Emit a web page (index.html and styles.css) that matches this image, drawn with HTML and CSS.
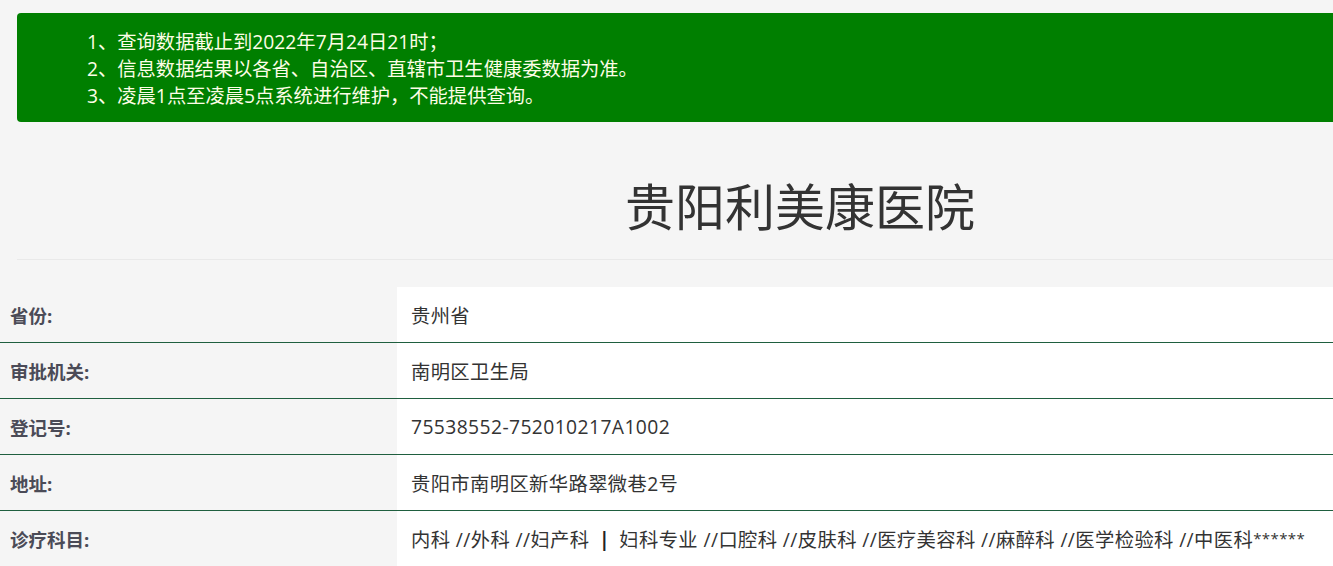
FILE: index.html
```html
<!DOCTYPE html>
<html lang="zh-CN">
<head>
<meta charset="utf-8">
<title>贵阳利美康医院</title>
<link rel="stylesheet" href="styles.css">
</head>
<body>
<div class="page">
  <div class="notice">
    <p>1、查询数据截止到2022年7月24日21时；</p>
    <p>2、信息数据结果以各省、自治区、直辖市卫生健康委数据为准。</p>
    <p>3、凌晨1点至凌晨5点系统进行维护，不能提供查询。</p>
  </div>
  <div class="title-wrap">
    <h1 class="title">贵阳利美康医院</h1>
  </div>
  <div class="info">
    <div class="row"><div class="label">省份:</div><div class="value">贵州省</div></div>
    <div class="row"><div class="label">审批机关:</div><div class="value">南明区卫生局</div></div>
    <div class="row"><div class="label">登记号:</div><div class="value">75538552-752010217A1002</div></div>
    <div class="row"><div class="label">地址:</div><div class="value">贵阳市南明区新华路翠微巷2号</div></div>
    <div class="row"><div class="label">诊疗科目:</div><div class="value">内科 //外科 //妇产科 <span class="sep">|</span> 妇科专业 //口腔科 //皮肤科 //医疗美容科 //麻醉科 //医学检验科 //中医科<span class="stars">******</span></div></div>
  </div>
</div>
</body>
</html>
```

FILE: styles.css
```css
html, body {
  margin: 0;
  padding: 0;
  background: #f5f5f5;
  overflow: hidden;
}
body {
  font-family: "Open Sans", "Noto Sans CJK SC", sans-serif;
  color: #333;
}
.page {
  width: 1600px;
  padding-top: 13px;
}
.notice {
  margin: 0 17px;
  background: #007f00;
  border-radius: 4px;
  padding: 15px 70px 13px;
  color: #fdfde6;
  font-size: 19.3px;
  line-height: 27px;
}
.notice p {
  margin: 0;
}
.title-wrap {
  margin: 0 17px;
  height: 137px;
  border-bottom: 1px solid #e9e9e9;
  display: flex;
  align-items: center;
  justify-content: center;
}
.title {
  margin: 0;
  padding-top: 33px;
  font-size: 50px;
  font-weight: normal;
  color: #333;
  line-height: 1;
}
.info {
  margin-top: 27px;
}
.row {
  display: flex;
  height: 55px;
  border-bottom: 1px solid #1f5f3f;
}
.label {
  width: 387px;
  padding-left: 10px;
  display: flex;
  align-items: center;
  font-size: 18.5px;
  font-weight: bold;
  color: #4b4b57;
  background: #f5f5f5;
}
.value {
  flex: 1;
  padding-left: 14px;
  display: flex;
  align-items: center;
  white-space: pre;
  font-size: 19.3px;
  letter-spacing: 0.4px;
  color: #333;
  background: #fff;
}
.sep {
  font-weight: bold;
  color: #222;
  margin: 0 4px;
}
.stars {
  font-size: 15px;
  align-self: flex-start;
  margin-top: 17px;
}
```
